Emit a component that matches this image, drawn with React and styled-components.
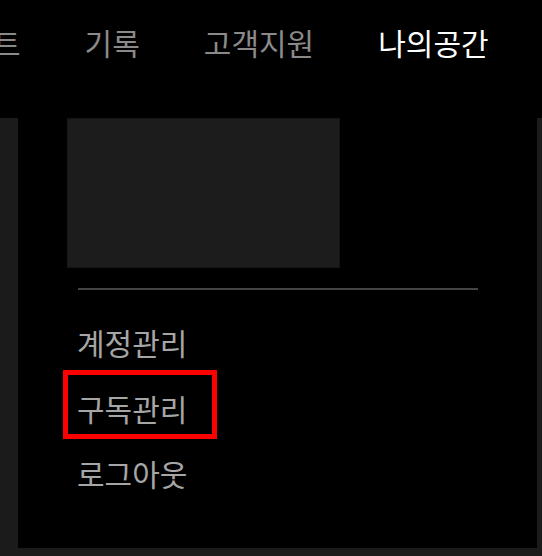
import React from "react";
import styled, { createGlobalStyle } from "styled-components";

const GlobalStyle = createGlobalStyle`
  html, body {
    margin: 0;
    padding: 0;
    background: #000;
  }
  body {
    font-family: "Noto Sans CJK KR", "Noto Sans", sans-serif;
    overflow: hidden;
  }
`;

const navItems = [
  { label: "트" },
  { label: "기록" },
  { label: "고객지원" },
  { label: "나의공간", active: true },
];

const menuItems = [
  { label: "계정관리" },
  { label: "구독관리", marked: true },
  { label: "로그아웃" },
];

const App = () => {
  return (
    <Page>
      <GlobalStyle />
      <Header>
        <Nav>
          {navItems.map((item, index) => (
            <NavLink key={index} $active={item.active}>
              {item.label}
            </NavLink>
          ))}
        </Nav>
      </Header>
      <Content />

      <Dropdown>
        <Thumb />
        <Divider />
        <MenuList>
          {menuItems.map((item, index) => (
            <MenuItem key={index} $marked={item.marked}>
              {item.label}
            </MenuItem>
          ))}
        </MenuList>
      </Dropdown>
    </Page>
  );
};

export default App;

const Page = styled.div`
  position: relative;
  width: 542px;
  height: 556px;
  display: flex;
  flex-direction: column;
  background: #000;
  overflow: hidden;
`;

const Header = styled.header`
  height: 118px;
  flex-shrink: 0;
  background: #000;
`;

const Nav = styled.nav`
  display: flex;
  align-items: center;
  gap: 64px;
  margin-left: -7px;
  padding-top: 20px;
  white-space: nowrap;
`;

const NavLink = styled.a`
  font-size: 30px;
  color: ${(props) => (props.$active ? "#ffffff" : "#8a8a8a")};
  cursor: pointer;
`;

const Content = styled.main`
  flex: 1;
  background: #1b1b1b;
`;

const Dropdown = styled.div`
  position: absolute;
  top: 118px;
  left: 18px;
  right: 5px;
  bottom: 8px;
  background: #000;
  display: flex;
  flex-direction: column;
`;

const Thumb = styled.div`
  width: 273px;
  height: 150px;
  margin-left: 49px;
  box-sizing: border-box;
  background: #1c1c1c;
  border: 1px solid #151515;
`;

const Divider = styled.div`
  width: 400px;
  height: 2px;
  margin: 20px 0 0 60px;
  background: #444;
`;

const MenuList = styled.ul`
  list-style: none;
  margin: 30px 0 0 59px;
  padding: 0;
  display: flex;
  flex-direction: column;
  gap: 21.6px;
`;

const MenuItem = styled.li`
  position: relative;
  width: max-content;
  font-size: 30px;
  color: #a6a6a6;
  cursor: pointer;

  ${(props) =>
    props.$marked &&
    `
    &::after {
      content: "";
      position: absolute;
      left: -14px;
      right: -30px;
      top: -16px;
      bottom: -9px;
      border: 5px solid #ff0000;
    }
  `}
`;
